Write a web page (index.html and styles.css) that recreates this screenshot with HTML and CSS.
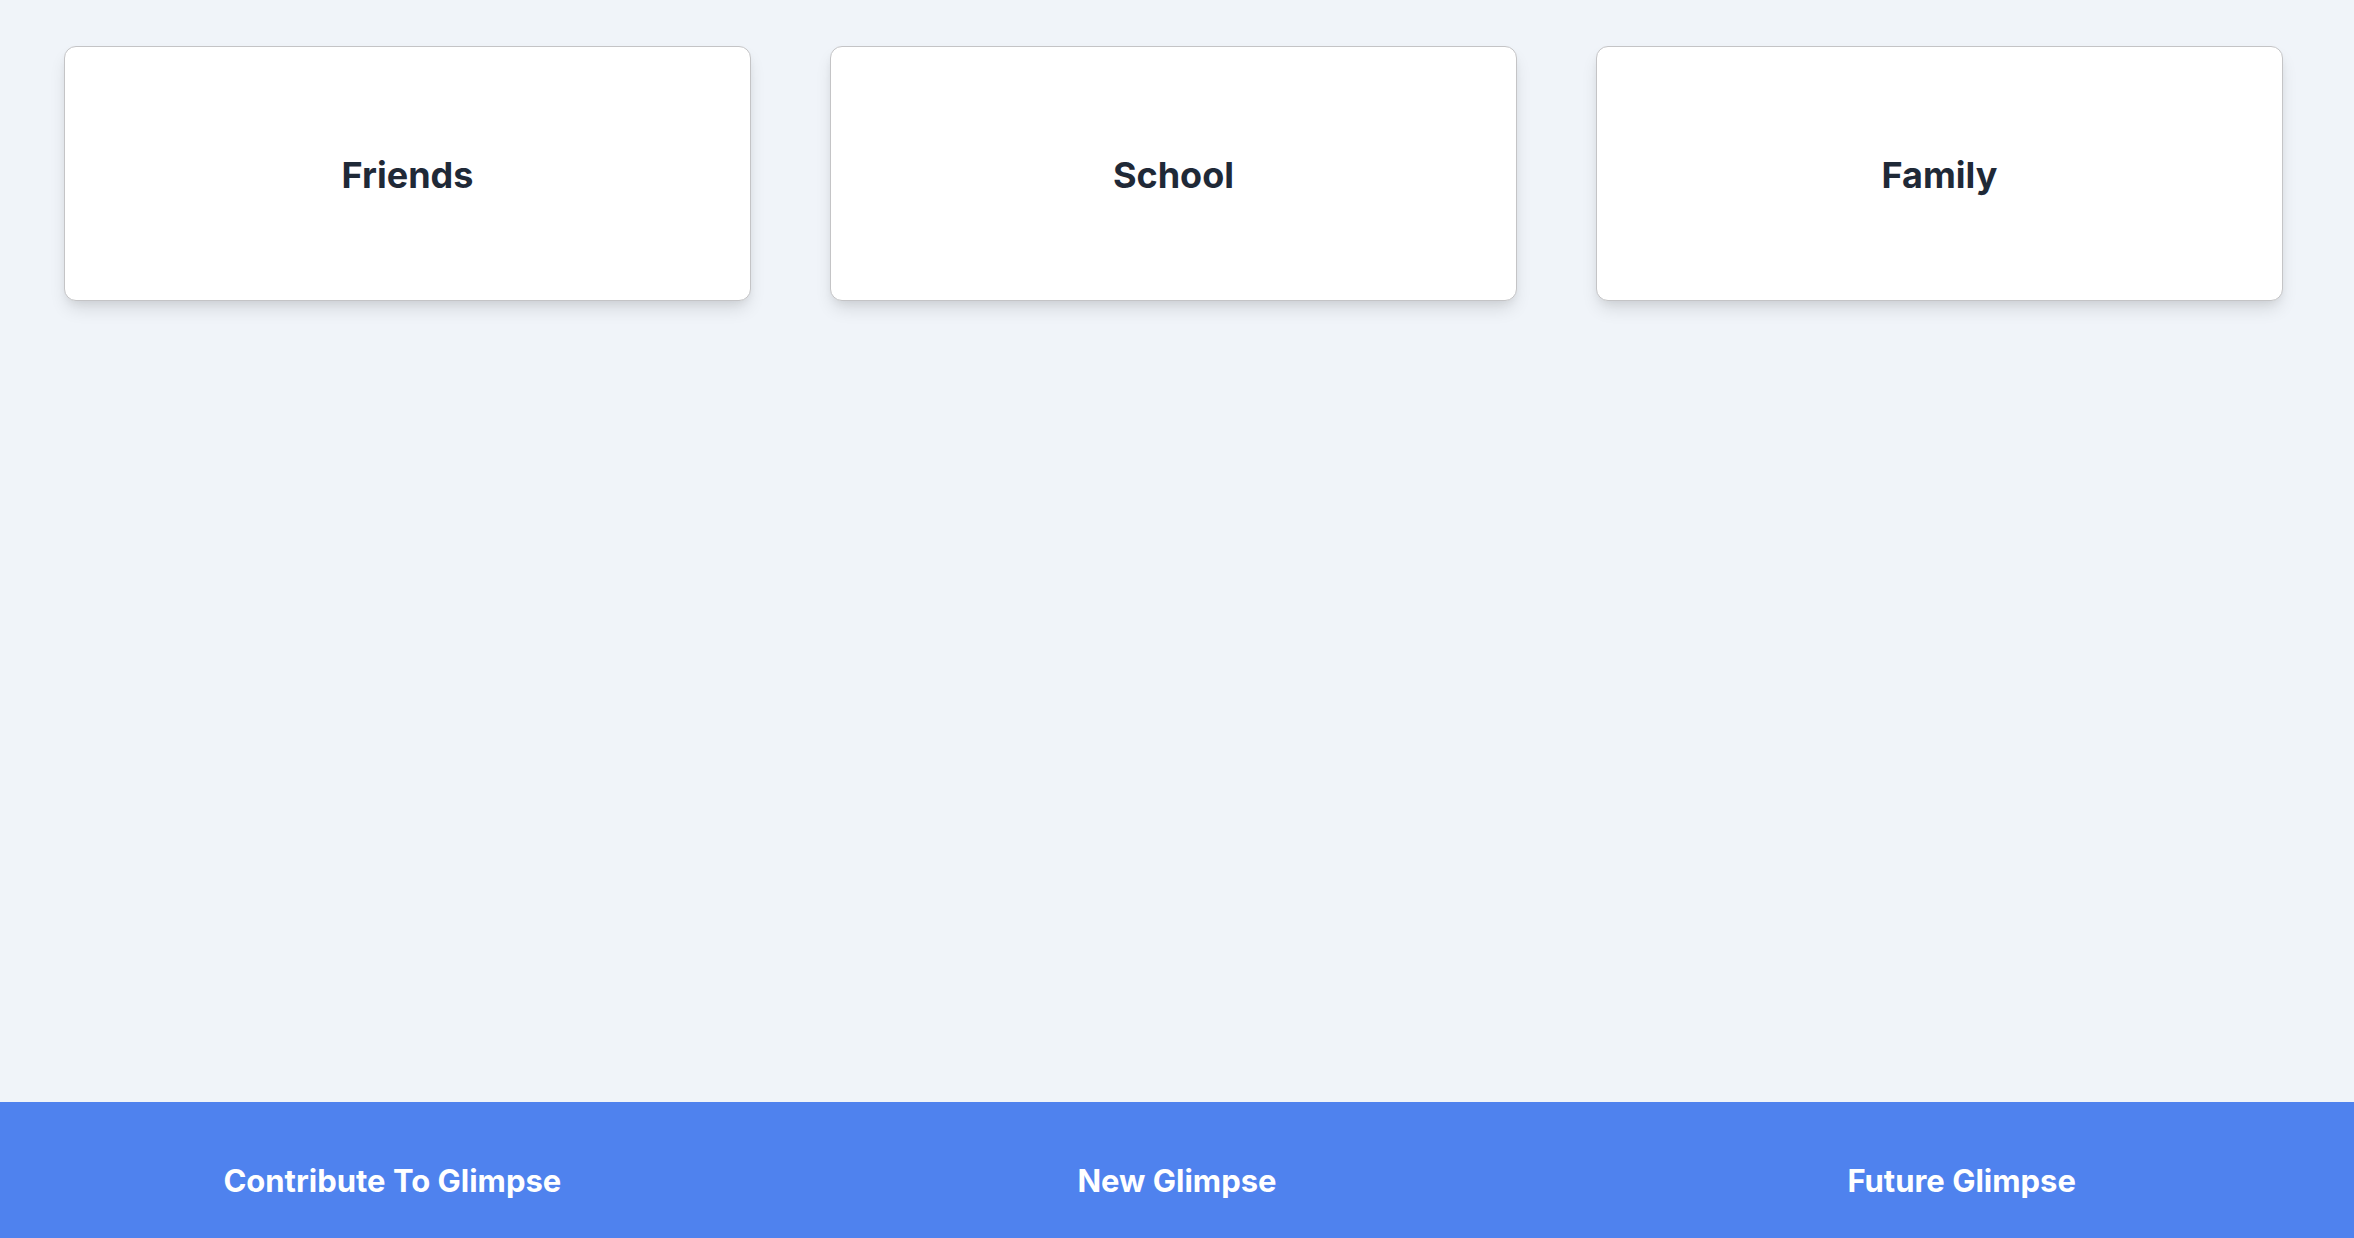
FILE: index.html
```html
<!DOCTYPE html>
<html lang="en">
<head>
<meta charset="utf-8">
<title>Glimpse</title>
<link rel="stylesheet" href="styles.css">
</head>
<body>
<div class="page">
  <main class="main">
    <div class="cards">
      <div class="card"><h2 class="card-title">Friends</h2></div>
      <div class="card"><h2 class="card-title">School</h2></div>
      <div class="card"><h2 class="card-title">Family</h2></div>
    </div>
  </main>
  <footer class="footer">
    <div class="footer-item">Contribute To Glimpse</div>
    <div class="footer-item">New Glimpse</div>
    <div class="footer-item">Future Glimpse</div>
  </footer>
</div>
</body>
</html>
```

FILE: styles.css
```css
* { box-sizing: border-box; }
html, body { margin: 0; padding: 0; }
body {
  background: #f0f4f9;
  font-family: Inter, "Noto Sans", "Liberation Sans", sans-serif;
  color: #1f2937;
}
.page {
  min-height: 100vh;
  display: flex;
  flex-direction: column;
}
.main {
  flex: 1;
  padding: 46px 71px 0 64px;
}
.cards {
  display: grid;
  grid-template-columns: repeat(3, 1fr);
  column-gap: 79px;
}
.card {
  height: 255px;
  background: #ffffff;
  border: 1.5px solid #c4c4c6;
  border-radius: 12px;
  box-shadow: 0 10px 18px -3px rgba(0,0,0,0.12), 0 4px 8px -2px rgba(0,0,0,0.06);
  display: flex;
  align-items: center;
  justify-content: center;
  padding-top: 2px;
}
.card-title {
  margin: 0;
  font-size: 36px;
  font-weight: 700;
  line-height: 44px;
  color: #1f2937;
}
.footer {
  height: 136px;
  background: #4f82ee;
  display: grid;
  grid-template-columns: repeat(3, 1fr);
  padding-top: 59px;
}
.footer-item {
  text-align: center;
  color: #ffffff;
  font-size: 31px;
  font-weight: 700;
  line-height: 40px;
}
```
